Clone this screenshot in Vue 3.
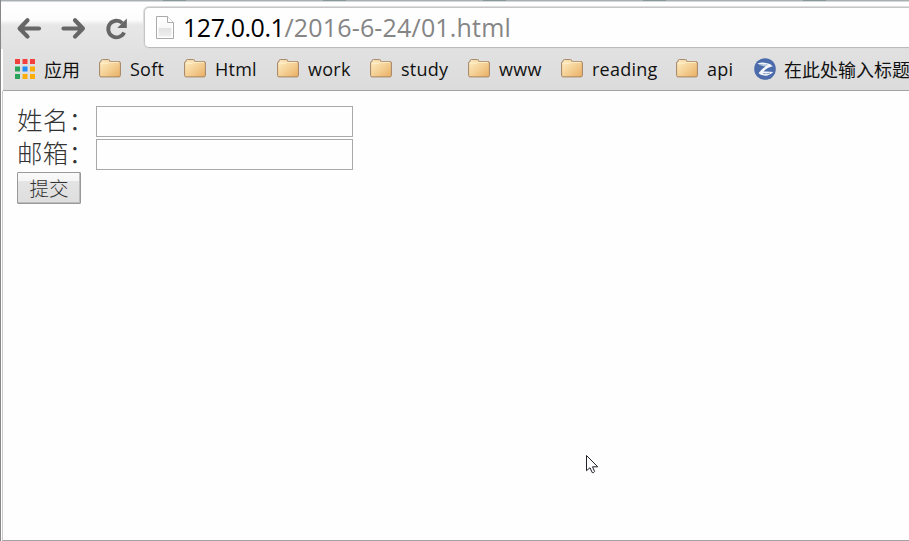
<script setup>
const folders = [
  { name: 'Soft', cls: 'soft' },
  { name: 'Html', cls: 'html' },
  { name: 'work', cls: 'work' },
  { name: 'study', cls: 'study' },
  { name: 'www', cls: 'www' },
  { name: 'reading', cls: 'reading' },
  { name: 'api', cls: 'api' }
]
const fields = ['姓名：', '邮箱：']
</script>

<template>
  <div class="window">
    <div class="tabs-edge"><i v-for="n in 5" :key="n"></i></div>
    <header class="toolbar">
      <svg class="nav" width="128" height="26" viewBox="0 0 128 26">
        <g fill="none" stroke="#666" stroke-width="4.2" stroke-linecap="round" stroke-linejoin="round">
          <path d="M11.500 5.200 3.600 13.500l7.900 8.100M4.200 13.500H23" />
          <path d="M59 5.200 66.900 13.500 59 21.600M66.300 13.500H47.500" />
          <path d="M106.300 8A8.300 8.300 0 1 0 108.100 17.500" stroke-width="3.800" stroke-linecap="butt" />
        </g>
        <path d="M110.800 3.500v9.500h-9.500z" fill="#666" />
      </svg>
      <div class="address">
        <svg class="page" width="18" height="24" viewBox="0 0 18 24">
          <defs><linearGradient id="paper" x2="0" y2="1"><stop stop-color="#fff" /><stop offset=".53" stop-color="#f8f8f8" /><stop offset=".54" stop-color="#e2e2e2" /><stop offset="1" stop-color="#eee" /></linearGradient></defs>
          <path d="M.5.5h11l6 6v16H.5z" fill="#fff" stroke="#aaa" />
          <path d="M2.500 2.500h8v5h5v13h-13z" fill="url(#paper)" />
          <path d="M11.500.5v6h6" fill="#fff" stroke="#aaa" />
        </svg>
        <span class="url"><b>127.0.0.1</b><span>/2016-6-24/01.html</span></span>
      </div>
    </header>

    <nav class="bookmarks">
      <a class="mark apps">
        <svg width="20" height="20" viewBox="0 0 20 20">
          <path d="M0 0h5v5H0zM7.500 0h5v5h-5zM15 0h5v5h-5z" fill="#f23f3c" />
          <path d="M0 7.500h5v5H0zM0 15h5v5H0z" fill="#2ba35a" />
          <path d="M7.500 7.500h5v5h-5z" fill="#238df5" />
          <path d="M15 7.500h5v5h-5zM7.500 15h5v5h-5zM15 15h5v5h-5z" fill="#fbae0a" />
        </svg>
        <span class="cjk">应用</span>
      </a>
      <a v-for="f in folders" :key="f.name" class="mark" :class="f.cls">
        <svg width="22" height="19" viewBox="0 0 22 19">
          <defs><linearGradient :id="'fill-' + f.cls" x2="1" y2="1"><stop stop-color="#fff0c8" /><stop offset=".5" stop-color="#f5d196" /><stop offset="1" stop-color="#e9ae63" /></linearGradient></defs>
          <path d="M.6 4q0-1.500 1.500-1.500V1.800Q2.100.6 3.300.6h6.200q1.200 0 1.200 1.200v.7h9.200q1.500 0 1.500 1.500v12.400q0 1.500-1.500 1.500H2.100Q.6 17.900.6 16.400z" :fill="'url(#fill-' + f.cls + ')'" stroke="#a38465" />
          <path d="M1.800 4.300h6.500l1.500-1h10.100" fill="none" stroke="#fff1cb" />
        </svg>
        <span>{{ f.name }}</span>
      </a>
      <a class="mark title">
        <svg width="22" height="22" viewBox="0 0 22 22">
          <circle cx="11" cy="11" r="10.800" fill="#4c6baa" />
          <path d="M3.500 5.500Q8 3.800 12 5q4.600.6 6.800 3.300-5.200 1-9.300 5.300 5-.5 9.800.5-2.800 3-6.500 3.600-5.600.2-8.300-2.400 2.400-3.600 7.300-7.100Q7.500 8.300 3.500 5.500z" fill="#f2f6fb" />
          <path d="M5.500 6.600q5 1 7.800.2M9 15.500q3.500.7 7-.4" fill="none" stroke="#8fa6ca" />
        </svg>
        <span class="cjk">在此处输入标题</span>
      </a>
    </nav>

    <main class="content">
      <form @submit.prevent>
        <label v-for="label in fields" :key="label"><span>{{ label }}</span><input type="text"></label>
        <button type="submit">提交</button>
      </form>
      <svg class="cursor" width="13" height="20" viewBox="0 0 13 20"><path d="M.5.5v15.200l3.500-3 2.300 5q1.600.2 2.300-1.200L6.500 11.800h5.200z" fill="#fff" stroke="#20202a" /></svg>
    </main>
  </div>
</template>

<style>
body { margin: 0; overflow: hidden; }
</style>

<style scoped>
* { box-sizing: border-box; }
.window {
  width: 909px; height: 541px; display: flex; flex-direction: column;
  border-left: 1px solid #888; background: #fefefe; overflow: hidden;
  font-family: "Open Sans", "Noto Sans CJK SC", sans-serif; color: #111;
}
.tabs-edge { height: 2px; display: flex; padding-left: 162px; gap: 137px; background: #a9b0b2; border-bottom: 1px solid #d5d8d8; flex: none; }
.tabs-edge i { width: 23px; height: 1px; background: #87989b; flex: none; }
.toolbar { height: 47px; flex: none; display: flex; align-items: flex-start; padding: 5px 0 0 15px; background: linear-gradient(#fff 0, #fcfcfc 18px, #e7e7e7 23px, #e2e2e2 100%); }
.nav { margin-top: 8px; width: 128px; flex: none; overflow: visible; }
.address { height: 41px; width: 790px; flex: none; border: 1px solid #c5c5c5; border-bottom-color: #bbb; border-radius: 5px 0 0 5px; background: #fefefe; display: flex; align-items: center; padding-left: 11px; gap: 9px; box-shadow: 0 0 0 1px #ddd; }
.page { flex: none; margin-top: 1px; }
.url { font-size: 25px; line-height: 32px; margin-top: -1px; letter-spacing: .18px; white-space: nowrap; color: #858585; }
.url b { font-weight: 400; color: #000; letter-spacing: -.45px; }
.bookmarks {
  height: 42px; flex: none; margin-left: 2px; padding: 0 0 2px 12px;
  display: grid; grid-template-columns: 84px 85px 93px 93px 98px 93px 115px 78px 170px;
  background: linear-gradient(#e1e1e1, #dcdcdc); border-bottom: 1px solid #a3a3a3;
}
.mark { display: flex; align-items: center; gap: 9px; font-size: 18px; letter-spacing: .25px; white-space: nowrap; }
.title { gap: 8px; }
.mark svg { flex: none; }
.cjk { font-family: "Noto Sans CJK SC", sans-serif; font-size: 18px; line-height: 24px; letter-spacing: 0; }
.content { flex: 1; margin-left: 1px; padding: 15px 0 0 14px; border-left: 1px solid #ccc; border-bottom: 1px solid #a3a3a3; position: relative; }
form { display: flex; flex-direction: column; align-items: flex-start; gap: 2px; }
label { display: flex; height: 31px; align-items: center; font: 300 25.500px/30px "Noto Sans CJK SC", sans-serif; color: #333; }
label span { width: 79px; height: 31px; line-height: 25px; letter-spacing: .3px; white-space: nowrap; }
input { width: 257px; height: 31px; border: 1px solid #a9a9a9; background: #fefefe; padding: 2px; margin: 0; outline: none; }
button { width: 64px; height: 32px; padding: 0; border: 1px solid #999; border-radius: 1px; background: linear-gradient(#fafafa 0, #f5f5f5 27%, #e4e4e4 28%, #dedede 100%); color: #333; font: 300 19.500px/28px "Noto Sans CJK SC", sans-serif; box-shadow: inset -1px -1px #bbb; }
.cursor { position: absolute; left: 583px; top: 364px; }
</style>
